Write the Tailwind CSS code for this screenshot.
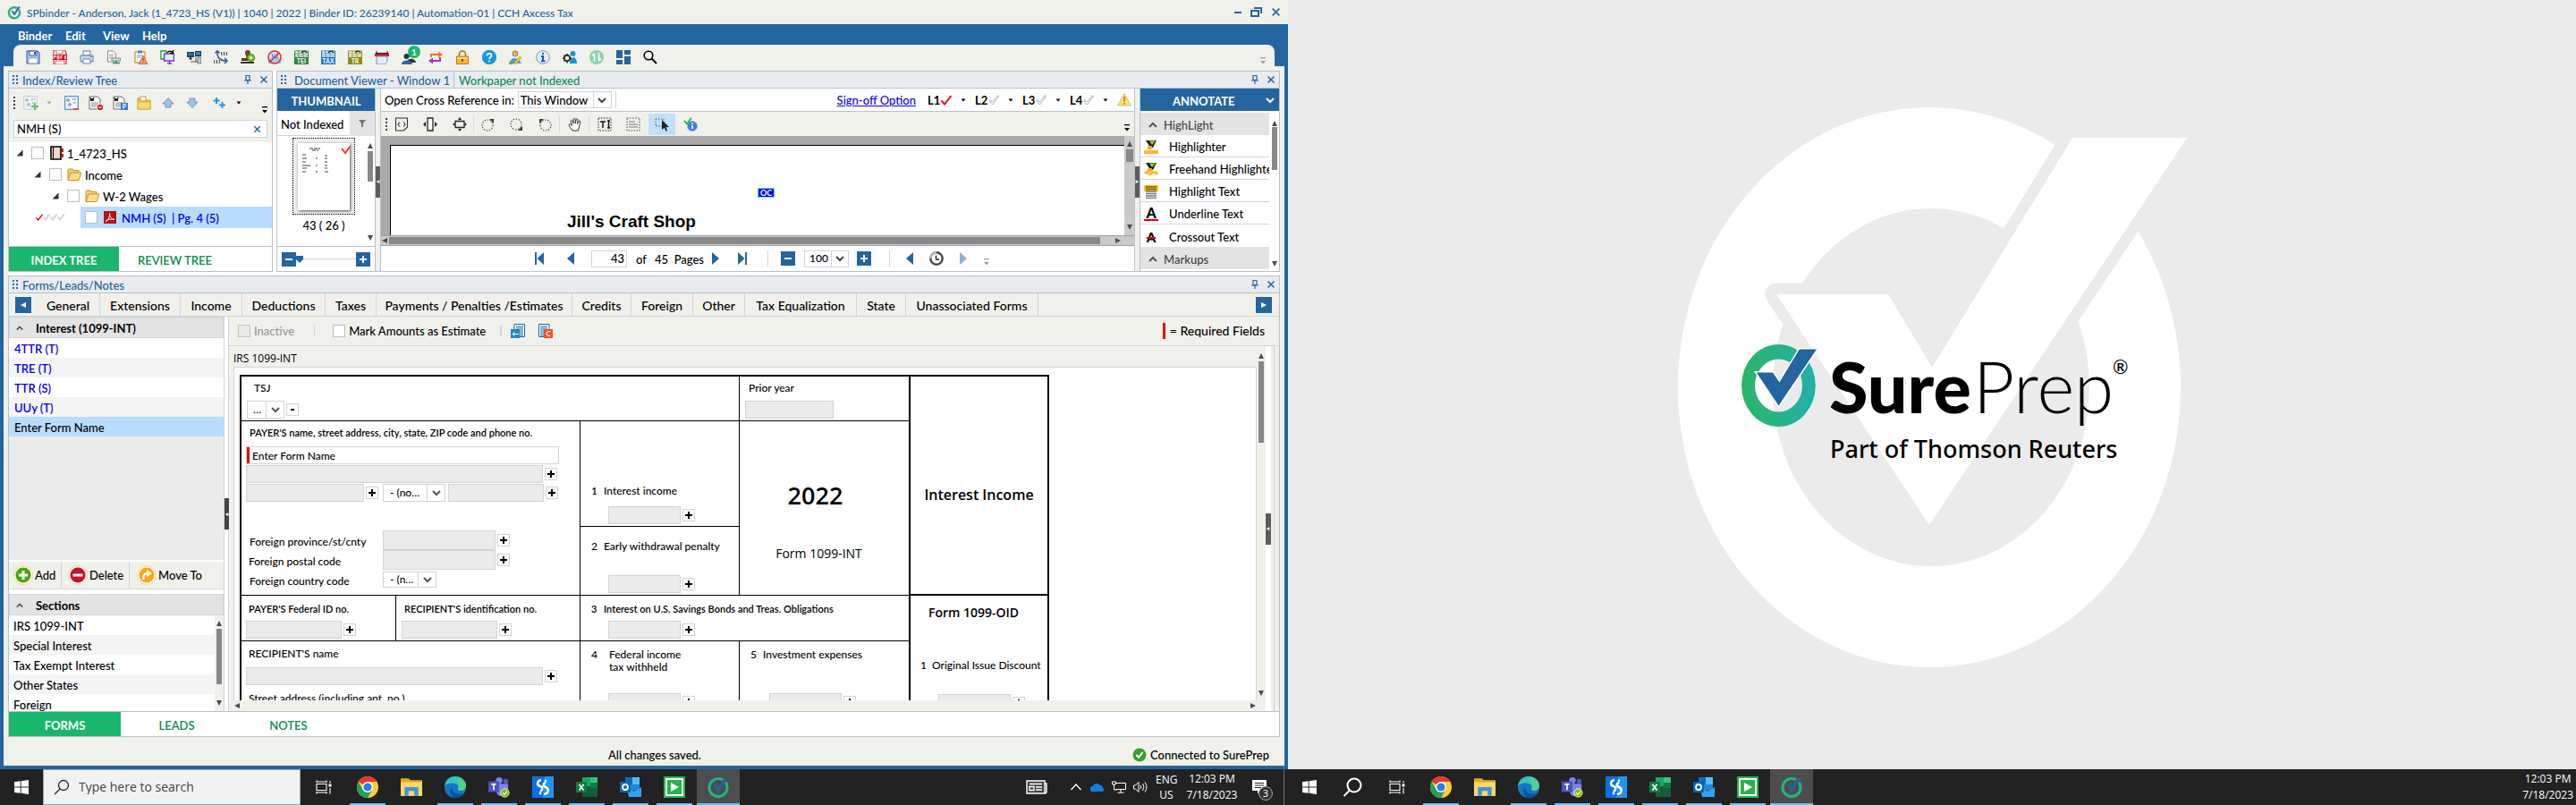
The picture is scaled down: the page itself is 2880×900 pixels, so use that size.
<!DOCTYPE html>
<html lang="en">
<head>
<meta charset="utf-8">
<title>SPbinder</title>
<script src="https://cdn.jsdelivr.net/npm/@tailwindcss/browser@4"></script>
</head>
<body class="font-['Lato',sans-serif] text-[13px] leading-4 font-medium text-black">
<!-- icon library -->
<svg width="0" height="0" class="absolute" aria-hidden="true">
<defs>
<linearGradient id="ring" x1="0" x2="1"><stop offset="0" stop-color="#2cb567"/><stop offset="1" stop-color="#22b0ac"/></linearGradient>
<symbol id="logo" viewBox="0 0 24 24"><circle cx="12" cy="12.5" r="9.2" fill="none" stroke="url(#ring)" stroke-width="3.6"/><path d="M6 8.5h4l2.2 3.5L18 2h5L12.200 18z" fill="#2465a0" stroke="#f1f1eb" stroke-width=".8"/></symbol>
<symbol id="logoDark" viewBox="0 0 24 24"><circle cx="12" cy="12.500" r="10" fill="none" stroke="#22b08a" stroke-width="3.200"/><path d="M6 8.500h4l2.200 3.500L18.500 2h4.500L12.200 19z" fill="#2465a0" stroke="#4d4d4d" stroke-width=".6"/></symbol>
<symbol id="pin" viewBox="0 0 10 12"><path d="M3 1.500h4v5H3zM1 7h8M5 7v4" fill="none" stroke="#2465a0" stroke-width="1.200"/></symbol>
<symbol id="x" viewBox="0 0 10 10"><path d="M1.500 1.500l7 7M8.500 1.500l-7 7" fill="none" stroke="currentColor" stroke-width="1.500"/></symbol>
<symbol id="grip" viewBox="0 0 8 12"><path d="M1 1h2v2H1zM5 1h2v2H5zM1 5h2v2H1zM5 5h2v2H5zM1 9h2v2H1zM5 9h2v2H5z" fill="#2465a0"/></symbol>
<symbol id="dots" viewBox="0 0 3 16"><path d="M0 1h2v2H0zM0 5h2v2H0zM0 9h2v2H0zM0 13h2v2H0z" fill="#444"/></symbol>
<symbol id="over" viewBox="0 0 6 8"><path d="M0 0h6v1.200H0zM0 4h6L3 7.500z" fill="currentColor"/></symbol>
<symbol id="up" viewBox="0 0 8 8"><path d="M4 1l3 6H1z" fill="#4a4d52"/></symbol>
<symbol id="down" viewBox="0 0 8 8"><path d="M4 7l3-6H1z" fill="#4a4d52"/></symbol>
<symbol id="left" viewBox="0 0 8 8"><path d="M1 4l6-3v6z" fill="currentColor"/></symbol>
<symbol id="right" viewBox="0 0 8 8"><path d="M7 4L1 1v6z" fill="currentColor"/></symbol>
<symbol id="chev" viewBox="0 0 10 8"><path d="M1 2l4 4 4-4" fill="none" stroke="currentColor" stroke-width="2"/></symbol>
<symbol id="chevup" viewBox="0 0 10 8"><path d="M1 6l4-4 4 4" fill="none" stroke="#555" stroke-width="2"/></symbol>
<symbol id="caret" viewBox="0 0 6 4"><path d="M.5.5h5L3 3.500z" fill="currentColor"/></symbol>
<symbol id="exp" viewBox="0 0 8 8"><path d="M7.500.5v7h-7z" fill="#333"/></symbol>
<symbol id="plus" viewBox="0 0 10 10"><path d="M5 1v8M1 5h8" stroke="currentColor" stroke-width="2" fill="none"/></symbol>
<symbol id="minus" viewBox="0 0 10 10"><path d="M1 5h8" stroke="currentColor" stroke-width="2" fill="none"/></symbol>
<symbol id="check" viewBox="0 0 12 12"><path d="M.5 6.500L4 10.500 11.500 1" fill="none" stroke="currentColor" stroke-width="2"/></symbol>
<symbol id="checkout" viewBox="0 0 12 12"><path d="M.8 6.500l1.500-1L4.200 8 10.500.8l1 .8L4.500 11z" fill="#fff" stroke="#999" stroke-width=".8"/></symbol>
<!-- main toolbar -->
<symbol id="save" viewBox="0 0 16 16"><path d="M1 1h12l2 2v12H1z" fill="#a9c8f2" stroke="#2b55a8"/><path d="M4 1h8v5H4z" fill="#fff" stroke="#2b55a8"/><path d="M3 9h10v6H3z" fill="#fff" stroke="#7da0d8"/><path d="M9 2h2v3H9z" fill="#2b55a8"/></symbol>
<symbol id="pbfx" viewBox="0 0 16 16"><path d="M1 0h12l2 2v14H1z" fill="#fbecec" stroke="#b23" /><path d="M4 0h7v4H4zM3 12h10v4H3z" fill="#fff" stroke="#c66"/><path d="M-1 5h18v6H-1z" fill="#d8000f"/><path d="M1 10V6h2v2H1M5 6h2v4H5zM5 8h2M9 10V6h2M9 8h2M13 6l2 4M15 6l-2 4" stroke="#fff" fill="none" stroke-width=".9"/></symbol>
<symbol id="print" viewBox="0 0 16 16"><path d="M4 1h8v5H4z" fill="#fff" stroke="#678"/><path d="M1 6h14v7H1z" fill="#c9dbf3" stroke="#5b7fb5"/><path d="M4 10h8v5H4z" fill="#fff" stroke="#5b7fb5"/><path d="M12 7.500h2" stroke="#2a5"/></symbol>
<symbol id="scan" viewBox="0 0 16 16"><path d="M1.500 1h6l3 3v9h-9z" fill="#fff" stroke="#888"/><path d="M3 5h5M3 7h5M3 9h4" stroke="#999"/><path d="M6 9h9.500v3H6z" fill="#ddd" stroke="#888"/><path d="M7 14.500h8M11 12v3" stroke="#1d9a55" stroke-width="1.500"/></symbol>
<symbol id="clipw" viewBox="0 0 16 16"><path d="M2 2h11v12H2z" fill="#fff" stroke="#d9a13b" stroke-width="1.500"/><path d="M5 .5h5v3H5z" fill="#4b87c9"/><path d="M4 6h6M4 8h4" stroke="#69c"/><path d="M11 6l5 9.500H6z" fill="#f5a07c" stroke="#c9532a" stroke-width=".8"/><path d="M11 9v3M11 13v1" stroke="#a22"/></symbol>
<symbol id="send" viewBox="0 0 16 16"><path d="M1 1h6v9H1z" fill="#fff" stroke="#1a9a3c" stroke-width="1.300"/><path d="M4.500 4h11v8h-11z" fill="#d7f0fa" stroke="#8a2be2" stroke-width="1.500"/><path d="M8 15h5M10.500 12v3" stroke="#8a2be2" stroke-width="1.500"/><path d="M8 3c2-3 5-2 6 0M14.500 0v3.500H11" fill="none" stroke="#000" stroke-width="1.300"/></symbol>
<symbol id="pcs" viewBox="0 0 16 16"><path d="M0 2h8v6H0z" fill="#1a3a5a"/><path d="M1 3h6v3.500H1z" fill="#2f6da8"/><path d="M3 8h2v1.500H3zM2 9.500h4v1H2z" fill="#333"/><path d="M9 1h7v6H9z" fill="#1a3a5a"/><path d="M10 2h5v3.500h-5z" fill="#3a80c0"/><path d="M12 8h4v7h-4z" fill="#b8c8d8" stroke="#445" stroke-width=".6"/><path d="M4 13h8M10 7v6" stroke="#556" fill="none"/></symbol>
<symbol id="xref" viewBox="0 0 16 16"><path d="M4 1v4c1 5 4 7 10 7M1.500 3.500L4 .8l2.500 2.700M12 9l3 3-3 3" fill="none" stroke="#35539a" stroke-width="1.500"/><path d="M9 2q-1 2 0 4M14 2q1 2 0 4M11.500 2v4M1 11q-1 2 0 4M6 11q1 2 0 4M3.500 11v4" stroke="#222" fill="none" stroke-width=".9"/></symbol>
<symbol id="stamp" viewBox="0 0 16 16"><path d="M5 3a3 3 0 016 0c0 2-1.500 3-1.500 6h-3C6.500 6 5 5 5 3z" fill="#7a3b2a"/><path d="M1 9h13v3H1z" fill="#6a2f20"/><path d="M0 14h15" stroke="#333" stroke-width="2"/><circle cx="11.500" cy="8.500" r="4" fill="#6bbf1d" stroke="#3c8a0c"/><path d="M11.500 6.500v4M9.500 8.500h4" stroke="#fff" stroke-width="1.300"/></symbol>
<symbol id="nostamp" viewBox="0 0 16 16"><path d="M1 15V9l4-1 1-4h4l1 4 4 1v6z" fill="#7db7ff"/><circle cx="8" cy="8" r="7" fill="#cfe4ff" fill-opacity=".5" stroke="#ee2a2a" stroke-width="1.600"/><path d="M5 4l1 4 4 1M11 4v6" stroke="#2f7de0" fill="none"/><path d="M3 13L13 3" stroke="#ee2a2a" stroke-width="1.600"/></symbol>
<symbol id="sheet" viewBox="0 0 16 16"><path d="M.5 1h15v7H.5z" fill="#fff" stroke="currentColor"/><path d="M1 3.500h14M1 5.500h14M5 1v7M10 1v7" stroke="currentColor" stroke-width=".7"/><path d="M8 3c2-3 5-2 6 0" stroke="#222" fill="none" stroke-width="1.300"/><path d="M0 8h16v8H0z" fill="currentColor"/></symbol>
<symbol id="redprn" viewBox="0 0 16 16"><path d="M2 1h12l2 4H0z" fill="#222"/><path d="M2.500 0h11v3h-11z" fill="#e9e9f5"/><path d="M0 4h16v3H0z" fill="#e00f1c"/><path d="M2 7h12v6l-3 3H2z" fill="#e4ecfa" stroke="#7a8fc0"/></symbol>
<symbol id="users" viewBox="0 0 16 16"><circle cx="11" cy="5" r="3" fill="#333"/><path d="M6 14c0-5 9-6 10 0z" fill="#333"/><circle cx="5.500" cy="7" r="3" fill="#26334d"/><path d="M0 16c0-6 11-6 12 0z" fill="#2f64ad"/></symbol>
<symbol id="swap" viewBox="0 0 16 16"><path d="M3 8V5h10" fill="none" stroke="#ff6a1f" stroke-width="2"/><path d="M11 1.500v7L16 5z" fill="#ff6a1f"/><path d="M13 8v4H4" fill="none" stroke="#9b30d9" stroke-width="2"/><path d="M5 8.500v7L0 12z" fill="#9b30d9"/></symbol>
<symbol id="lock" viewBox="0 0 16 16"><path d="M4.500 8V4.500a3.500 3.500 0 017 0V8" fill="none" stroke="#9a7520" stroke-width="1.600"/><path d="M1.500 7h13v8.500h-13z" fill="#ffb52e" stroke="#c27c0c"/><path d="M2 8h12v2H2z" fill="#ffd97a"/><path d="M8 10v3" stroke="#5a3a00" stroke-width="1.600"/></symbol>
<symbol id="help" viewBox="0 0 16 16"><circle cx="8" cy="8" r="7.800" fill="#149be3" stroke="#0b6fb5" stroke-width=".6"/><path d="M5.500 6.300c0-3.300 5-3.300 5-.3 0 1.800-2.400 1.900-2.400 4M8.100 11.500v1.700" fill="none" stroke="#fff" stroke-width="1.700"/></symbol>
<symbol id="pen" viewBox="0 0 16 16"><circle cx="7" cy="4" r="3" fill="#e8b46a" stroke="#7a5010" stroke-width=".7"/><path d="M1 15c0-8 10-8 13 0z" fill="#4f9be0"/><path d="M0 13h4v3H0z" fill="#59b84a"/><path d="M5 15l7-8 2 1.500-6 7z" fill="#ffc83a" stroke="#a77a10" stroke-width=".6"/></symbol>
<symbol id="info" viewBox="0 0 16 16"><circle cx="8" cy="8" r="7.300" fill="#e6eefb" stroke="#6f94c4"/><path d="M8 3v2M6 7h2v5M6 12.200h4.500" stroke="#1558c0" stroke-width="2" fill="none"/></symbol>
<symbol id="gearp" viewBox="0 0 16 16"><circle cx="5" cy="9" r="3.300" fill="none" stroke="#333" stroke-width="2"/><path d="M5 4v2M5 12v2.500M0 9h2M8 9h2M1.500 5.500L3 7M1.500 12.500L3 11" stroke="#333" stroke-width="1.600"/><circle cx="11.500" cy="4" r="3" fill="#1596d8"/><path d="M8 15c0-9 8-9 8 0z" fill="#1596d8"/></symbol>
<symbol id="sync" viewBox="0 0 16 16"><circle cx="8" cy="8" r="8" fill="#8bd3ae"/><path d="M5.500 13V4M3 6.500L5.500 4M10.500 3v9M13 9.500L10.500 12" stroke="#fff" stroke-width="1.600" fill="none"/></symbol>
<symbol id="dash" viewBox="0 0 16 16"><path d="M0 0h7v9H0zM9 0h7v5H9zM0 11h7v5H0zM9 7h7v9H9z" fill="#2465a0"/></symbol>
<symbol id="find" viewBox="0 0 16 16"><circle cx="6" cy="6" r="4.800" fill="none" stroke="currentColor" stroke-width="1.600"/><path d="M9.500 9.500L15 15" stroke="currentColor" stroke-width="1.800"/></symbol>
<!-- tree -->
<symbol id="addnode" viewBox="0 0 16 16"><path d="M.7.700h14.600v14.600H.7z" fill="#eef4fc" stroke="currentColor"/><path d="M4 3v4M2 5h4M9 4h4M6 8v4M4 10h4M10 8h3" stroke="#444" stroke-width=".9" stroke-dasharray="1 .6"/></symbol>
<symbol id="doc" viewBox="0 0 16 16"><path d="M1 1h9l3 3v11H1z" fill="#fff" stroke="#666"/><path d="M3 8h8M3 10h8M3 12h6" stroke="#888"/><path d="M2 2l1 4 1-3 1 3 1-4" stroke="#000" fill="none"/></symbol>
<symbol id="fold" viewBox="0 0 16 16"><path d="M1 3h5l1 2h8v10H1z" fill="#f2c65a" stroke="#c99a2c"/><path d="M4 1h6v5H4z" fill="#fff" stroke="#c99a2c"/><path d="M1 7h14v8H1z" fill="#ffd76b" stroke="#d1a236" stroke-width=".7"/></symbol>
<symbol id="openf" viewBox="0 0 16 16"><path d="M1 14V3l1-1h4l1 1.500h6V6" fill="#f6d377" stroke="#c58f1e"/><path d="M1 14.500L4 6h12l-3 8.500z" fill="#ffe08a" stroke="#c58f1e"/></symbol>
<symbol id="arru" viewBox="0 0 14 12"><path d="M7 .6L13.200 7H10v4H4V7H.8z" fill="#9cc4e8" stroke="#7b93aa"/></symbol>
<symbol id="pluses" viewBox="0 0 14 12"><path d="M4 0v7M.5 3.500h7M10.500 5v7M7 8.500h7" stroke="#2196f3" stroke-width="2"/></symbol>
<symbol id="binder" viewBox="0 0 16 16"><path d="M1 1h11v14H1z" fill="#f0d5c8" stroke="#000" stroke-width="1.600"/><path d="M3.500 1v14" stroke="#000"/><path d="M13 3h2v4h-2zM13 9h2v4h-2z" fill="#f00"/></symbol>
<symbol id="pdf" viewBox="0 0 14 14"><path d="M0 0h14v14H0z" fill="#b80f14"/><path d="M2 11.500c3-1 5-5 4.500-9C7 7 9 9 12 9.500 9 8.500 4 9 2 11.500z" fill="none" stroke="#fff"/></symbol>
<symbol id="funnel" viewBox="0 0 10 10"><path d="M1 1h8L6 5v4H4V5z" fill="#777"/></symbol>
<!-- viewer -->
<symbol id="v1" viewBox="0 0 16 16"><path d="M1.500 1h13v10l-4 4h-9z M6 5.500L4 8l2 2.500M10 5.500L12 8l-2 2.500" fill="none" stroke="#333" stroke-width="1.100"/></symbol>
<symbol id="v2" viewBox="0 0 16 16"><path d="M5 1h6v14H5z" fill="#fff" stroke="#222" stroke-width="1.300"/><path d="M0 8l3-3v6zM16 8l-3-3v6z" fill="#222"/></symbol>
<symbol id="v3" viewBox="0 0 16 16"><path d="M3 4.500h10v7H3z" fill="none" stroke="#222" stroke-width="1.300"/><path d="M8 0l2 3H6zM8 16l2-3H6zM0 8l2.500-2v4zM16 8l-2.500-2v4z" fill="#222"/></symbol>
<symbol id="rot" viewBox="0 0 16 16"><circle cx="8" cy="9" r="6" fill="none" stroke="#555" stroke-dasharray="1.500 1.500" stroke-width="1.200"/><path d="M10 2h5v5z" fill="#4a3a20"/></symbol>
<symbol id="hand" viewBox="0 0 16 16"><path d="M5 15C3 12 1 10 1 8.500 2 7 3.500 8.500 4.500 9.500L3 4.500C3.500 3 5 3.500 5.300 4.500L6 7V2.500C6.500 1 8 1.200 8.200 2.500V7l1-4.500c.8-1.200 2-.5 1.900.7L10.500 7.500 12.300 4.500c1-.8 2 .2 1.500 1.200L12.500 11l-1 4z" fill="#fff" stroke="#333"/></symbol>
<symbol id="tsel" viewBox="0 0 16 16"><path d="M1 1h14v14H1z" fill="none" stroke="#222" stroke-dasharray="1.500 1.500"/><path d="M3 5h6M6 5v7M11 4h3M12.500 4v8M11 12h3" stroke="#111" stroke-width="1.500"/></symbol>
<symbol id="lsel" viewBox="0 0 16 16"><path d="M1 1h14v14H1z" fill="none" stroke="#444" stroke-dasharray="1.500 1.500"/><path d="M3 5h7M3 8h10M3 11h10" stroke="#777" stroke-width="1.200"/></symbol>
<symbol id="csel" viewBox="0 0 16 16"><path d="M1 2h9v8H1z" fill="none" stroke="#567" stroke-dasharray="1.500 1.500"/><path d="M8 3l8 8-3.500.3L14 15l-1.500.7L10.800 12 8 14z" fill="#222"/></symbol>
<symbol id="ichk" viewBox="0 0 16 16"><circle cx="10" cy="10" r="5.600" fill="#3d7be6" stroke="#9ab9ee"/><path d="M10 6.500v1.500M10 9v4" stroke="#fff" stroke-width="1.800"/><path d="M1 4l3 3.500L9 .8" fill="none" stroke="#13c13a" stroke-width="1.800"/></symbol>
<symbol id="warn" viewBox="0 0 16 15"><path d="M8 .8L15.500 14H.5z" fill="#ffe56b" stroke="#d6c06a"/><path d="M8 4v5.500M8 11v1.800" stroke="#f0603a" stroke-width="1.800"/></symbol>
<symbol id="clock" viewBox="0 0 16 16"><circle cx="8" cy="8" r="6.700" fill="#fff" stroke="#444" stroke-width="2.400"/><path d="M1.300 8a6.700 6.700 0 016.700-6.700" fill="none" stroke="#bbb" stroke-width="2.400"/><path d="M7.500 4.500V9H11" fill="none" stroke="#222" stroke-width="1.300"/></symbol>
<symbol id="hl" viewBox="0 0 16 16"><path d="M2 1h12l-4 8H7z" fill="#222"/><path d="M6 1.500h7L9 6z" fill="#9c3"/><path d="M5 7h4l-1 4H3z" fill="#f6a81c"/></symbol>
<symbol id="hlt" viewBox="0 0 16 15"><path d="M0 0h16v7H0z" fill="#fdbf0f"/><path d="M2 2h12M2 4.500h12" stroke="#7a5a10" stroke-width="1.300"/><path d="M2 7h12M2 9.500h12M2 12h12M2 14.500h12" stroke="#777" stroke-width="1.300"/></symbol>
<!-- forms -->
<symbol id="fadd" viewBox="0 0 22 22"><circle cx="11" cy="11" r="10.500" fill="#fdf6e3" stroke="#ecd9a8"/><circle cx="11" cy="11" r="8.500" fill="#48a50e"/><path d="M11 6v10M6 11h10" stroke="#fff" stroke-width="3"/></symbol>
<symbol id="fdel" viewBox="0 0 22 22"><circle cx="11" cy="11" r="10.500" fill="#fdf6e3" stroke="#ecd9a8"/><circle cx="11" cy="11" r="8.500" fill="#c8102e"/><path d="M5.500 11h11" stroke="#fff" stroke-width="3"/></symbol>
<symbol id="fmov" viewBox="0 0 22 22"><circle cx="11" cy="11" r="10.500" fill="#fdf6e3" stroke="#ecd9a8"/><circle cx="11" cy="11" r="8.500" fill="#f9a51a"/><path d="M7.500 16c-1-5 1-7 4.500-7" stroke="#fff" stroke-width="2.500" fill="none"/><path d="M11 5l6 4-6 4z" fill="#fff"/></symbol>
<symbol id="dl" viewBox="0 0 16 16"><path d="M4 .5h11.500v14H4z" fill="#fff" stroke="#1b66ad"/><path d="M6 3h8M6 5h8M6 7h8M6 9h8M6 11h8M6 13h8" stroke="#1b66ad"/></symbol>
<symbol id="ok" viewBox="0 0 16 16"><circle cx="8" cy="8" r="7.500" fill="#35a02a"/><path d="M4.500 8l2.500 3 4.500-6" fill="none" stroke="#fff" stroke-width="2"/></symbol>
<!-- taskbar -->
<symbol id="win" viewBox="0 0 16 16"><path d="M0 2.200L6.700 1.300V7.600H0zM7.600 1.200L16 0v7.600H7.600zM0 8.500h6.700v6.300L0 13.900zM7.600 8.500H16V16l-8.400-1.200z" fill="#fff"/></symbol>
<symbol id="mag" viewBox="0 0 18 18"><circle cx="11" cy="7" r="5.500" fill="none" stroke="currentColor" stroke-width="1.300"/><path d="M7 11l-6 6" stroke="currentColor" stroke-width="1.300"/></symbol>
<symbol id="tview" viewBox="0 0 18 16"><path d="M1 4.500h11v7H1zM1 .5V3M12 .5V3M1 2h11M1 13v2.500M12 13v2.500M1 14h11M16 1v2.500M16 9v6.500" fill="none" stroke="#fff" stroke-width="1.100"/><path d="M14.500 4.500h3v3h-3z" fill="#fff"/></symbol>
<symbol id="chrome" viewBox="0 0 24 24"><circle cx="12" cy="12" r="12" fill="#fc3"/><path d="M12 12L1.600 6A12 12 0 0122.400 6H12z" fill="#e33b2e"/><path d="M1.600 6A12 12 0 0012 24l5.200-9-5.200-3-5.200 3z" fill="#21a15a"/><circle cx="12" cy="12" r="6" fill="#fff"/><circle cx="12" cy="12" r="4.600" fill="#2b7de9"/></symbol>
<symbol id="expl" viewBox="0 0 22 20"><path d="M0 1h8l2 2h12v16H0z" fill="#e8a91c"/><path d="M0 5h22v14H0z" fill="#ffd667"/><path d="M4 19v-9h14v9h-4v-5H8v5z" fill="#3a96dd"/></symbol>
<symbol id="edge" viewBox="0 0 24 24"><circle cx="12" cy="12" r="12" fill="#1277c9"/><path d="M0 11C1 3 7 0 12 0c7 0 12 5 12 10 0 4-3 6-6 6-2 0-3-1-3-2 1-1 1-5-3-6C7 6.500 2 8 0 11z" fill="#36c5b8"/><path d="M14 1c6 1 10 5 10 9 0 4-3 6-6 6-2 0-3-1-3-2 3-5-1-9-1-13z" fill="#62d672" opacity=".7"/><path d="M8 12c0 6 5 9 13 7-3 4-7 5-10 5C6 22 5 15 8 12z" fill="#0c4f98"/></symbol>
<symbol id="teams" viewBox="0 0 26 24"><circle cx="13" cy="4" r="4" fill="#7b83eb"/><circle cx="21" cy="5" r="3" fill="#5059c9"/><path d="M10 8h14v8c0 4-5 7-8 7-4 0-6-3-6-5z" fill="#7b83eb"/><path d="M0 5h13v13H0z" fill="#4b53bc"/><path d="M3.500 8.500h6M6.500 8.500v7" stroke="#fff" stroke-width="1.800"/><circle cx="20" cy="19" r="5" fill="#7fba00" stroke="#fff"/><path d="M17.500 19l2 2 3-4" stroke="#fff" fill="none" stroke-width="1.300"/></symbol>
<symbol id="sapp" viewBox="0 0 24 24"><path d="M0 0h24v24H0z" fill="#0a6ee8"/><path d="M14 0h10v24H12z" fill="#1f95f3"/><path d="M10 4c-5 1-5 6-1 7 3 1 3 4 0 6M13 20c6-1 6-6 2-8-3-1-3-4 0-5" fill="none" stroke="#fff" stroke-width="2.600"/><circle cx="9" cy="19" r="1.400" fill="#fff"/><circle cx="15" cy="5" r="1.400" fill="#fff"/></symbol>
<symbol id="excel" viewBox="0 0 24 22"><path d="M7 0h17v22H7z" fill="#185c37"/><path d="M7 0h9v10H7z" fill="#21a366"/><path d="M16 0h8v6h-8z" fill="#33c481"/><path d="M16 6h8v6h-8z" fill="#107c41"/><path d="M0 5h12v12H0z" fill="#107c41"/><path d="M3.500 8l5 6.500M8.500 8l-5 6.500" stroke="#fff" stroke-width="1.700"/></symbol>
<symbol id="outl" viewBox="0 0 24 22"><path d="M6 0h16v16H6z" fill="#0f6cbd"/><path d="M14 0h8v8h-8z" fill="#50c0f5"/><path d="M6 8h16v6H6z" fill="#1a8ae0"/><path d="M8 12l8 4 8-5v11H10z" fill="#33a3ee"/><path d="M0 5h12v12H0z" fill="#0a64b8"/><circle cx="6" cy="11" r="3" fill="none" stroke="#fff" stroke-width="1.800"/></symbol>
<symbol id="play" viewBox="0 0 24 24"><path d="M0 0h24v24H0z" fill="#25b34b"/><path d="M3 3h18v18H3z" fill="none" stroke="#fff" stroke-width="2"/><path d="M8 7l9 5-9 5z" fill="#fff"/></symbol>
<symbol id="news" viewBox="0 0 24 16"><path d="M1 1h20v14H1zM21 4h2v9q0 2-2 2" fill="#444" stroke="#fff" stroke-width="1.400"/><path d="M4 4.500h14M11 8h7M11 11h7" stroke="#fff" stroke-width="1.300"/><path d="M4 7.500h5v4H4z" fill="none" stroke="#fff" stroke-width="1.300"/></symbol>
<symbol id="cloud" viewBox="0 0 16 10"><path d="M3 10a3 3 0 01-.5-6A4.500 4.500 0 0110 2.500a3.500 3.500 0 013.500 2.800A2.500 2.500 0 0113.500 10z" fill="#0f7fe0"/></symbol>
<symbol id="net" viewBox="0 0 16 14"><path d="M4.500 2.500h11v7h-11M10 10v3M6.500 13.200h7M.5 1h4v3h-4zM2.500 4v6h3" fill="none" stroke="#fff"/></symbol>
<symbol id="snd" viewBox="0 0 16 14"><path d="M.5 5h2L6 1.500v11L2.500 9h-2zM8 5q1.500 2 0 4M10.500 3q3 4 0 8M13 1.500q4 5.500 0 11" fill="none" stroke="#fff"/></symbol>
<symbol id="note" viewBox="0 0 16 16"><path d="M0 0h16v12H9l-3 3.500V12H0z" fill="#fff"/><path d="M3 3.500h10M3 6h10M3 8.500h7" stroke="#222"/></symbol>
</defs>
</svg>

<div class="grid h-screen grid-cols-2 grid-rows-[minmax(0,1fr)] overflow-hidden">

<!-- ============ primary display ============ -->
<div class="flex min-h-0 min-w-0 flex-col">
<header class="flex h-[27px] shrink-0 items-center bg-[#f1f1eb] pr-2 pl-2 text-[#2465a0]">
  <svg class="h-4 w-4"><use href="#logo"/></svg>
  <h1 class="mt-[2px] ml-[6px] text-[12px]">SPbinder - Anderson, Jack (1_4723_HS (V1)) | 1040 | 2022 | Binder ID: 26239140 | Automation-01 | CCH Axcess Tax</h1>
  <div class="ml-auto flex items-center gap-[10px]">
    <button aria-label="Minimize" class="h-[2px] w-2 bg-[#2465a0]"></button>
    <button aria-label="Restore"><svg class="h-[11px] w-[13px]" viewBox="0 0 13 11"><path d="M1 4h8v6H1zM4 1h8v6" fill="none" stroke="#2465a0" stroke-width="2"/></svg></button>
    <button aria-label="Close"><svg class="h-[11px] w-[11px]"><use href="#x"/></svg></button>
  </div>
</header>

<div class="flex min-h-0 flex-1 flex-col bg-[#2465a0] px-1 pb-1">
<nav class="flex h-[23px] shrink-0 items-center gap-4 pt-[2px] pl-[16px] font-bold text-white">
  <button class="w-[37px] text-left">Binder</button><button class="w-[26px] text-left">Edit</button><button class="w-7 text-left">View</button><button class="text-left">Help</button>
</nav>
<div class="mx-[11px] flex h-[24px] shrink-0 items-center rounded-t-lg bg-[#f1f1eb] pl-[7px] pt-1">
  <div class="flex [&>button]:relative [&>button]:flex [&>button]:w-[30px] [&>button]:justify-center [&_svg]:h-4 [&_svg]:w-4">
    <button aria-label="Save"><svg><use href="#save"/></svg></button>
    <button aria-label="PBFX"><svg><use href="#pbfx"/></svg></button>
    <button aria-label="Print"><svg><use href="#print"/></svg></button>
    <button aria-label="Scan"><svg><use href="#scan"/></svg></button>
    <button aria-label="Diagnostics"><svg><use href="#clipw"/></svg></button>
    <button aria-label="Send to display"><svg><use href="#send"/></svg></button>
    <button aria-label="Displays"><svg><use href="#pcs"/></svg></button>
    <button aria-label="Cross reference"><svg><use href="#xref"/></svg></button>
    <button aria-label="Add stamp"><svg><use href="#stamp"/></svg></button>
    <button aria-label="Hide stamps"><svg><use href="#nostamp"/></svg></button>
    <button class="text-[#2f8540]"><svg><use href="#sheet"/></svg><span class="absolute top-2 text-[7px] leading-2 font-bold text-white">TEI</span></button>
    <button class="text-[#1d78c8]"><svg><use href="#sheet"/></svg><span class="absolute top-2 text-[7px] leading-2 font-bold text-white">TAX</span></button>
    <button class="text-[#918a12]"><svg><use href="#sheet"/></svg><span class="absolute top-2 text-[7px] leading-2 font-bold text-white">TR</span></button>
    <button aria-label="Print queue"><svg><use href="#redprn"/></svg></button>
    <button><svg><use href="#users"/></svg><span class="absolute -top-[5px] left-[14px] h-[14px] w-[14px] rounded-full bg-[#1ab66b] text-center text-[10px] leading-[14px] font-bold text-white">1</span></button>
    <button aria-label="Swap"><svg><use href="#swap"/></svg></button>
    <button aria-label="Lock"><svg><use href="#lock"/></svg></button>
    <button aria-label="Help"><svg><use href="#help"/></svg></button>
    <button aria-label="Sign"><svg><use href="#pen"/></svg></button>
    <button aria-label="Info"><svg><use href="#info"/></svg></button>
    <button aria-label="User settings"><svg><use href="#gearp"/></svg></button>
    <button aria-label="Sync"><svg><use href="#sync"/></svg></button>
    <button aria-label="Dashboard"><svg><use href="#dash"/></svg></button>
    <button aria-label="Find"><svg><use href="#find"/></svg></button>
  </div>
  <svg class="mt-2 mr-[10px] ml-auto h-2 w-[6px] text-gray-400"><use href="#over"/></svg>
</div>

<main class="flex min-h-0 flex-1 flex-col bg-[#f1f1eb] px-[5px] pt-[5px]">
<div class="flex h-[225px] shrink-0 gap-1 bg-white">

  <!-- index / review tree -->
  <section class="flex w-[296px] flex-col border border-[#b9c1c9] bg-white">
    <div class="flex h-[19px] items-center border-b border-[#b9c1c9] bg-[#e8ebf0] pr-1 pl-[3px] text-[#2465a0]">
      <svg class="h-3 w-2"><use href="#grip"/></svg><h2 class="ml-1 pt-[2px]">Index/Review Tree</h2>
      <svg class="mr-2 ml-auto h-3 w-[10px]"><use href="#pin"/></svg><svg class="h-[10px] w-[10px]"><use href="#x"/></svg>
    </div>
    <div class="bg-[#f1f1eb] px-[5px] pb-[5px]">
      <div class="flex h-[35px] items-center pb-1 [&>svg]:h-4 [&>svg]:w-4">
        <svg class="max-w-[3px]"><use href="#dots"/></svg>
        <span class="relative ml-2 h-4 w-4 text-[#a9c2dd]"><svg class="h-4 w-4 opacity-70"><use href="#addnode"/></svg><svg class="absolute -right-[2px] -bottom-[1px] h-[10px] w-[10px] text-[#6dbb6d]"><use href="#plus"/></svg></span>
        <svg class="ml-[10px] max-h-1 max-w-[6px] text-gray-400"><use href="#caret"/></svg>
        <span class="relative ml-[14px] h-4 w-4 text-[#2f7de0]"><svg class="h-4 w-4"><use href="#addnode"/></svg><svg class="absolute -right-[1px] -bottom-[3px] h-2 w-2 text-[#e6352b]"><use href="#minus"/></svg></span>
        <span class="relative ml-[11px] h-4 w-4"><svg class="h-4 w-4"><use href="#doc"/></svg><svg class="absolute -right-[1px] -bottom-[1px] h-2 w-2"><use href="#fdel"/></svg></span>
        <span class="relative ml-[11px] h-4 w-4"><svg class="h-4 w-4"><use href="#doc"/></svg><span class="absolute -right-[1px] bottom-0 h-2 w-2 bg-[#3a78d8] text-center text-[7px] leading-2 font-bold text-white">P</span></span>
        <svg class="ml-[11px]"><use href="#fold"/></svg>
        <svg class="ml-[12px] max-h-3 max-w-[14px]"><use href="#arru"/></svg>
        <svg class="ml-[13px] max-h-3 max-w-[14px] rotate-180"><use href="#arru"/></svg>
        <svg class="ml-[16px] max-h-3 max-w-[14px]"><use href="#pluses"/></svg>
        <svg class="ml-[12px] max-h-1 max-w-[6px]"><use href="#caret"/></svg>
        <svg class="mt-4 ml-auto max-h-2 max-w-[6px]"><use href="#over"/></svg>
      </div>
      <div class="flex h-5 items-center border border-[#cfd3d6] bg-white pr-[6px] pl-[3px] text-[#2465a0]">
        <input aria-label="Search tree" value="NMH (S)" class="h-4 min-w-0 flex-1 text-black outline-none"><svg class="h-[9px] w-[9px]"><use href="#x"/></svg>
      </div>
    </div>
    <ul class="flex-1 [&>li]:flex [&>li]:h-6 [&>li]:items-center">
      <li class="pl-2"><svg class="h-2 w-2"><use href="#exp"/></svg><input type="checkbox" aria-label="1_4723_HS" class="ml-[9px] h-[14px] w-[14px] appearance-none border border-[#b5c0ca]"><svg class="ml-[7px] h-4 w-4"><use href="#binder"/></svg><span class="ml-[3px] pt-[2px]">1_4723_HS</span></li>
      <li class="pl-7"><svg class="h-2 w-2"><use href="#exp"/></svg><input type="checkbox" aria-label="Income" class="ml-[9px] h-[14px] w-[14px] appearance-none border border-[#b5c0ca]"><svg class="ml-[6px] h-4 w-4"><use href="#openf"/></svg><span class="ml-1 pt-[2px]">Income</span></li>
      <li class="pl-12"><svg class="h-2 w-2"><use href="#exp"/></svg><input type="checkbox" aria-label="W-2 Wages" class="ml-[9px] h-[14px] w-[14px] appearance-none border border-[#b5c0ca]"><svg class="ml-[6px] h-4 w-4"><use href="#openf"/></svg><span class="ml-1 pt-[2px]">W-2 Wages</span></li>
      <li class="pl-[30px]"><svg class="h-2 w-2 text-red-600"><use href="#check"/></svg><svg class="h-2 w-2"><use href="#checkout"/></svg><svg class="h-2 w-2"><use href="#checkout"/></svg><svg class="h-2 w-2"><use href="#checkout"/></svg>
        <span class="ml-[18px] flex h-6 flex-1 items-center bg-[#b9ddff] pl-[5px] text-[#0a00f0]"><input type="checkbox" aria-label="NMH (S) page 4" class="h-[14px] w-[14px] appearance-none border border-[#b5c0ca] bg-white"><svg class="mr-[6px] ml-[7px] h-[14px] w-[14px]"><use href="#pdf"/></svg><span class="pt-[2px] font-semibold whitespace-pre">NMH (S)  | Pg. 4 (5)</span></span></li>
    </ul>
    <div class="flex h-7 border-t border-[#b9c1c9]">
      <button class="w-[123px] bg-[#1ab66b] pt-[2px] font-bold text-white">INDEX TREE</button><button class="w-[125px] pt-[2px] font-semibold text-[#0c8c55]">REVIEW TREE</button>
    </div>
  </section>

  <!-- document viewer -->
  <section class="flex min-w-0 flex-1 flex-col border border-[#b9c1c9] bg-white">
    <div class="flex h-[19px] shrink-0 items-center border-b border-[#b9c1c9] bg-[#e8ebf0] pr-1 pl-[3px] text-[#2465a0]">
      <svg class="h-3 w-2"><use href="#grip"/></svg><h2 class="ml-2 pt-[2px]">Document Viewer - Window 1</h2><span class="ml-1 border-l border-[#b9c1c9] pt-[2px] pl-[5px] text-[#0c8c55]">Workpaper not Indexed</span>
      <svg class="mr-2 ml-auto h-3 w-[10px]"><use href="#pin"/></svg><svg class="h-[10px] w-[10px]"><use href="#x"/></svg>
    </div>
    <div class="flex min-h-0 flex-1">
      <div class="flex w-[109px] shrink-0 flex-col">
        <button class="h-[25px] bg-[#2465a0] pt-[2px] font-bold text-white">THUMBNAIL</button>
        <div class="flex h-7 items-center border-b border-gray-300 pl-1"><span class="flex-1 pt-[2px]">Not Indexed</span><span class="flex h-7 w-7 items-center justify-center bg-[#e3e3e3]"><svg class="h-[10px] w-[10px]"><use href="#funnel"/></svg></span></div>
        <div class="flex flex-1 pt-[2px]">
          <div class="ml-[17px] flex flex-1 flex-col items-center">
            <div class="h-[86px] w-[70px] border border-dotted border-black bg-[#eee] p-[5px]"><div class="h-[75px] bg-white shadow-[1px_1px_3px_#555]">
              <svg class="h-[75px] w-[58px]" viewBox="0 0 58 75"><path d="M13 6h12M16 8h7" stroke="#333" stroke-width="1.200" stroke-dasharray="4 1"/><path d="M5 13h4M5 17h5M5 21h4M5 25h9M5 28h5M5 32h4M20 17h2M20 25h2M20 32h2M30 14h3M30 17h3M30 21h3M30 25h3M30 28h3M30 32h4" stroke="#444"/><path d="M49 6l4 5 7-9" stroke="#f22" fill="none" stroke-width="1.800"/></svg></div></div>
            <span class="mt-1">43 ( 26 )</span>
          </div>
          <div class="flex w-[22px] flex-col items-center py-[5px] pl-3"><svg class="h-2 w-2"><use href="#up"/></svg><div class="mt-[2px] mb-auto h-[34px] w-[6px] bg-[#888]"></div><svg class="h-2 w-2"><use href="#down"/></svg></div>
        </div>
        <div class="flex h-7 items-center border-t border-[#b9c1c9] px-[5px]">
          <button aria-label="Smaller" class="flex h-4 w-4 items-center justify-center bg-[#2465a0] text-white"><svg class="h-[10px] w-[10px]"><use href="#minus"/></svg></button>
          <svg class="h-2 w-2" viewBox="0 0 8 8"><path d="M0 0h8v4L4 8 0 4z" fill="#2465a0"/></svg><span class="h-px flex-1 bg-gray-300"></span>
          <button aria-label="Larger" class="flex h-4 w-4 items-center justify-center bg-[#2465a0] text-white"><svg class="h-[10px] w-[10px]"><use href="#plus"/></svg></button>
        </div>
      </div>
      <div class="flex w-[7px] shrink-0 items-center border-x border-[#b9c1c9] bg-[#f1f1eb] pb-5 text-white"><button aria-label="Collapse thumbnails" class="mt-6 flex h-[35px] w-[5px] items-center bg-[#5c5c5c]"><svg class="h-2 w-[5px]"><use href="#left"/></svg></button></div>

      <div class="flex min-w-0 flex-1 flex-col">
        <div class="flex h-[26px] items-center border-b border-[#b9c1c9] pl-1">
          <label for="xr">Open Cross Reference in:</label>
          <div class="flex flex-1"><div class="ml-1 flex h-[19px] w-[105px] border border-gray-300"><select id="xr" class="min-w-0 flex-1 appearance-none pl-[2px] leading-4"><option>This Window</option></select><span class="flex w-5 items-center justify-center border-l border-gray-300"><svg class="h-2 w-[10px] text-[#444]"><use href="#chev"/></svg></span></div><span class="ml-1 h-[19px] w-px bg-gray-300"></span></div>
          <a href="#" class="mr-[13px] text-[#0a00f0] underline">Sign-off Option</a>
          <div class="flex font-bold [&>span]:flex [&>span]:w-[53px] [&>span]:items-center [&>span]:gap-[1px]">
            <span>L1<svg class="h-3 w-3 text-[#e2141b]"><use href="#check"/></svg><svg class="ml-[9px] h-1 w-[6px]"><use href="#caret"/></svg></span>
            <span>L2<svg class="h-3 w-3"><use href="#checkout"/></svg><svg class="ml-[9px] h-1 w-[6px]"><use href="#caret"/></svg></span>
            <span>L3<svg class="h-3 w-3"><use href="#checkout"/></svg><svg class="ml-[9px] h-1 w-[6px]"><use href="#caret"/></svg></span>
            <span>L4<svg class="h-3 w-3"><use href="#checkout"/></svg><svg class="ml-[9px] h-1 w-[6px]"><use href="#caret"/></svg></span>
          </div>
          <svg class="mr-[3px] h-[15px] w-4"><use href="#warn"/></svg>
        </div>
        <div class="flex h-[27px] items-center bg-[#f1f1eb] pl-[5px] [&>button]:flex [&>button]:h-6 [&>button]:w-[30px] [&>button]:items-center [&>button]:justify-center [&>button>svg]:h-4 [&>button>svg]:w-4 [&>i]:h-5 [&>i]:w-px [&>i]:bg-[#dcdcd6]">
          <svg class="h-4 w-[3px]"><use href="#dots"/></svg>
          <button aria-label="Actual size"><svg><use href="#v1"/></svg></button><button class="ml-[2px]" aria-label="Fit width"><svg><use href="#v2"/></svg></button><button class="ml-[3px]" aria-label="Fit page"><svg><use href="#v3"/></svg></button><i></i>
          <button aria-label="Rotate right"><svg><use href="#rot"/></svg></button><button class="ml-[3px]" aria-label="Rotate 180"><svg class="rotate-90"><use href="#rot"/></svg></button><button class="ml-[2px]" aria-label="Rotate left"><svg class="-scale-x-100"><use href="#rot"/></svg></button><i></i>
          <button class="ml-[2px]" aria-label="Pan"><svg><use href="#hand"/></svg></button><i></i>
          <button class="ml-[2px]" aria-label="Select text"><svg><use href="#tsel"/></svg></button><button class="ml-[2px]" aria-label="Select lines"><svg><use href="#lsel"/></svg></button><button class="ml-[2px] bg-[#c0e0fb]" aria-label="Select objects"><svg><use href="#csel"/></svg></button><button class="ml-[2px]" aria-label="Verify"><svg><use href="#ichk"/></svg></button>
          <svg class="mt-2 mr-[5px] ml-auto h-2 w-[6px]"><use href="#over"/></svg>
        </div>
        <div class="flex min-h-0 flex-1">
          <div class="flex-1 bg-[#a9a9a9] pt-[10px] pl-[10px]"><div class="flex h-full flex-col items-start border-t border-l border-black bg-white">
            <span class="mt-[47px] ml-[410px] h-[11px] w-[19px] border border-cyan-300 bg-[#0a00f0] text-center text-[9px] leading-[9px] font-bold text-white">OC</span>
            <p class="mt-[17px] ml-[197px] font-['Liberation_Sans',sans-serif] text-[19px] leading-5 font-bold">Jill's Craft Shop</p>
          </div></div>
          <div class="flex w-[11px] flex-col items-center bg-[#cacaca] py-[5px]"><svg class="h-2 w-2"><use href="#up"/></svg><div class="mt-[2px] mb-auto h-[14px] w-2 bg-[#888]"></div><svg class="h-2 w-2"><use href="#down"/></svg></div>
        </div>
        <div class="flex h-[12px] items-center border-y border-gray-400 bg-[#cacaca] text-[#4a4d52]"><svg class="h-2 w-2"><use href="#left"/></svg><div class="ml-[1px] h-2 flex-1 bg-[#888]"></div><svg class="mr-[14px] ml-4 h-2 w-2"><use href="#right"/></svg></div>
        <div class="flex h-7 items-center text-[#2465a0]">
          <button aria-label="First page" class="ml-[172px]"><svg class="h-4 w-[10px]" viewBox="0 0 10 16"><path d="M0 1h2v14H0zM10 1v14L2.500 8z" fill="#2465a0"/></svg></button>
          <button aria-label="Previous page" class="ml-[26px]"><svg class="h-4 w-2" viewBox="0 0 8 16"><path d="M8 1v14L0 8z" fill="#2465a0"/></svg></button>
          <input aria-label="Page" value="43" class="ml-[19px] h-[19px] w-10 border border-gray-300 pr-[2px] text-right text-black"><span class="ml-[10px] w-[21px] pt-[2px] text-black">of</span><span class="w-[64px] pt-[2px] text-black">45&nbsp; Pages</span>
          <button aria-label="Next page"><svg class="h-4 w-2" viewBox="0 0 8 16"><path d="M0 1v14l8-7z" fill="#2465a0"/></svg></button>
          <button aria-label="Last page" class="ml-[21px]"><svg class="h-4 w-[10px]" viewBox="0 0 10 16"><path d="M8 1h2v14H8zM0 1v14l7.500-7z" fill="#2465a0"/></svg></button>
          <span class="ml-[23px] h-[18px] w-px bg-gray-300"></span>
          <button aria-label="Zoom out" class="ml-[14px] flex h-4 w-4 items-center justify-center bg-[#2465a0] text-white"><svg class="h-[10px] w-[10px]"><use href="#minus"/></svg></button>
          <div class="ml-[10px] flex h-[19px] w-[50px] border border-gray-300 text-black"><select aria-label="Zoom" class="min-w-0 flex-1 appearance-none pl-[5px] text-[12px] leading-4"><option>100</option></select><span class="flex w-[19px] items-center justify-center border-l border-gray-300 text-[#444]"><svg class="h-2 w-[10px]"><use href="#chev"/></svg></span></div>
          <button aria-label="Zoom in" class="ml-[9px] flex h-4 w-4 items-center justify-center bg-[#2465a0] text-white"><svg class="h-[10px] w-[10px]"><use href="#plus"/></svg></button>
          <span class="ml-[20px] h-[18px] w-px bg-gray-300"></span>
          <button aria-label="Back" class="ml-[18px]"><svg class="h-4 w-2" viewBox="0 0 8 16"><path d="M8 1v14L0 8z" fill="#2465a0"/></svg></button>
          <svg class="ml-[18px] h-4 w-4"><use href="#clock"/></svg>
          <button aria-label="Forward" class="ml-[18px]"><svg class="h-4 w-2" viewBox="0 0 8 16"><path d="M0 1v14l8-7z" fill="#8fb0d2"/></svg></button>
          <svg class="mt-2 ml-[19px] h-2 w-[6px] text-gray-400"><use href="#over"/></svg>
        </div>
      </div>

      <div class="flex w-[7px] shrink-0 items-center border-x border-[#b9c1c9] bg-[#f1f1eb] pb-5 text-white"><button aria-label="Collapse annotations" class="mt-6 flex h-[35px] w-[5px] items-center bg-[#5c5c5c]"><svg class="h-2 w-[5px]"><use href="#right"/></svg></button></div>
      <div class="flex w-[155px] shrink-0 flex-col">
        <button class="flex h-[25px] items-center bg-[#2465a0] pr-[5px] pl-9 font-bold text-white"><span class="flex-1 pt-[2px] text-left">ANNOTATE</span><svg class="h-2 w-[10px]"><use href="#chev"/></svg></button>
        <div class="mt-[2px] flex min-h-0 flex-1">
          <ul class="min-w-0 flex-1 overflow-hidden whitespace-nowrap [&>li]:flex [&>li]:h-[25px] [&>li]:items-center">
            <li class="bg-[#e3e3e3] pt-[2px] pl-[9px] text-[#444]"><svg class="mr-[7px] h-2 w-[10px]"><use href="#chevup"/></svg>HighLight</li>
            <li class="gap-3 border-b border-gray-300 pt-[2px] pl-1"><svg class="h-4 w-4" viewBox="0 0 16 16"><use href="#hl"/><path d="M0 12h16v4H0z" fill="#fdb92c"/></svg>Highlighter</li>
            <li class="gap-3 border-b border-gray-300 pt-[2px] pl-1"><svg class="h-4 w-4 shrink-0" viewBox="0 0 16 16"><use href="#hl"/><path d="M1 13c3-4 5 3 7 0s5-2 7 1" fill="none" stroke="#fdb92c" stroke-width="3"/></svg>Freehand Highlighter</li>
            <li class="gap-3 border-b border-gray-300 pt-[2px] pl-1"><svg class="h-[15px] w-4"><use href="#hlt"/></svg>Highlight Text</li>
            <li class="gap-3 border-b border-gray-300 pt-[2px] pl-1"><span class="h-4 w-4 border-b-2 border-red-600 text-center text-[16px] leading-[14px] font-black">A</span>Underline Text</li>
            <li class="gap-3 pt-[2px] pl-1"><span class="w-4 text-center text-[15px] leading-4 font-black line-through decoration-red-600 decoration-2">A</span>Crossout Text</li>
            <li class="bg-[#e3e3e3] pt-[2px] pl-[9px] text-[#444]"><svg class="mr-[7px] h-2 w-[10px]"><use href="#chevup"/></svg>Markups</li>
          </ul>
          <div class="flex w-[11px] flex-col items-center py-1"><svg class="mt-1 h-2 w-2"><use href="#up"/></svg><div class="mb-auto h-12 w-[6px] bg-[#888]"></div><svg class="h-2 w-2"><use href="#down"/></svg></div>
        </div>
      </div>
    </div>
  </section>
</div>

<div class="h-1 shrink-0 bg-white"></div>

<!-- forms / leads / notes -->
<section class="flex min-h-0 flex-1 flex-col border border-[#b9c1c9]">
  <div class="flex h-[19px] shrink-0 items-center border-b border-[#b9c1c9] bg-[#e8ebf0] pr-1 pl-[3px] text-[#2465a0]">
    <svg class="h-3 w-2"><use href="#grip"/></svg><h2 class="ml-1 pt-[2px]">Forms/Leads/Notes</h2>
    <svg class="mr-2 ml-auto h-3 w-[10px]"><use href="#pin"/></svg><svg class="h-[10px] w-[10px]"><use href="#x"/></svg>
  </div>
  <div class="flex h-[26px] shrink-0 items-center border-b border-gray-300 pr-2 pl-[7px]">
    <button aria-label="Scroll tabs left" class="flex h-[18px] w-[18px] items-center justify-center bg-[#2465a0] text-white"><svg class="h-2 w-2"><use href="#left"/></svg></button>
    <div class="ml-[6px] flex self-stretch text-[14px] [&>button]:border-r [&>button]:border-gray-300 [&>button]:pt-[2px]">
      <button class="w-[71px]">General</button><button class="w-[90px]">Extensions</button><button class="w-[69px]">Income</button><button class="w-[93px]">Deductions</button><button class="w-[57px]">Taxes</button><button class="w-[219px]">Payments / Penalties /Estimates</button><button class="w-[66px]">Credits</button><button class="w-[69px]">Foreign</button><button class="w-[58px]">Other</button><button class="w-[125px]">Tax Equalization</button><button class="w-[55px]">State</button><button class="w-[148px]">Unassociated Forms</button>
    </div>
    <button aria-label="Scroll tabs right" class="ml-auto flex h-[18px] w-[18px] items-center justify-center bg-[#2465a0] text-white"><svg class="h-2 w-2"><use href="#right"/></svg></button>
  </div>

  <div class="flex min-h-0 flex-1">
    <div class="flex w-[240px] shrink-0 flex-col">
      <h3 class="flex h-6 shrink-0 items-center border border-gray-300 bg-[#e3e3e3] pt-[2px] pl-[7px] font-bold"><svg class="mr-[14px] h-2 w-2"><use href="#chevup"/></svg>Interest (1099-INT)</h3>
      <ul class="[&>li]:flex [&>li]:h-[22px] [&>li]:items-center [&>li]:pt-[2px] [&>li]:pl-[6px]">
        <li class="bg-white font-semibold text-[#0a00f0]">4TTR (T)</li><li class="bg-[#f4f4f4] font-semibold text-[#0a00f0]">TRE (T)</li><li class="bg-white font-semibold text-[#0a00f0]">TTR (S)</li><li class="bg-[#f4f4f4] font-semibold text-[#0a00f0]">UUy (T)</li><li class="bg-[#b9ddff]">Enter Form Name</li>
      </ul>
      <div class="flex-1 bg-[#ebebeb]"></div>
      <div class="flex h-[33px] shrink-0 items-center border-t-2 border-b border-t-white border-b-gray-300 pl-[5px]">
        <button class="flex w-[54px] items-center gap-[2px] border-r border-gray-300 py-1"><svg class="h-[22px] w-[22px]"><use href="#fadd"/></svg>Add</button>
        <button class="ml-[7px] flex w-[69px] items-center gap-[2px] border-r border-gray-300 py-1"><svg class="h-[22px] w-[22px]"><use href="#fdel"/></svg>Delete</button>
        <button class="ml-2 flex items-center gap-[2px]"><svg class="h-[22px] w-[22px]"><use href="#fmov"/></svg>Move To</button>
      </div>
      <div class="h-[5px] shrink-0 bg-white"></div>
      <h3 class="flex h-6 shrink-0 items-center border border-gray-300 bg-[#e3e3e3] pt-[2px] pl-[7px] font-bold"><svg class="mr-[14px] h-2 w-2"><use href="#chevup"/></svg>Sections</h3>
      <div class="flex h-[107px] shrink-0 overflow-hidden">
        <ul class="flex-1 [&>li]:flex [&>li]:h-[22px] [&>li]:items-center [&>li]:pt-[2px] [&>li]:pl-[5px]">
          <li class="bg-white">IRS 1099-INT</li><li class="bg-[#f4f4f4]">Special Interest</li><li class="bg-white">Tax Exempt Interest</li><li class="bg-[#f4f4f4]">Other States</li><li class="bg-white">Foreign</li>
        </ul>
        <div class="flex w-[10px] flex-col items-center py-[5px]"><svg class="h-2 w-2"><use href="#up"/></svg><div class="mt-[2px] mb-auto h-[62px] w-[6px] bg-[#888]"></div><svg class="h-2 w-2"><use href="#down"/></svg></div>
      </div>
    </div>
    <div class="flex w-[6px] shrink-0 items-center border-x border-gray-300 bg-white text-white"><button aria-label="Collapse list" class="h-[35px] w-[6px] bg-[#444]"><svg class="h-2 w-[5px]"><use href="#left"/></svg></button></div>

    <div class="flex min-w-0 flex-1 flex-col">
      <div class="flex h-[33px] shrink-0 items-center border-b border-gray-300 pl-[10px]">
        <label class="flex items-center gap-1 text-[#999]"><input type="checkbox" disabled class="h-[14px] w-[14px] appearance-none border border-[#c4c4c4] bg-[#e8e8e4]">Inactive</label>
        <span class="ml-[22px] h-3 w-px bg-gray-300"></span>
        <label class="ml-5 flex items-center gap-1"><input type="checkbox" class="h-[14px] w-[14px] appearance-none border border-[#b5c0ca] bg-white">Mark Amounts as Estimate</label>
        <span class="ml-4 h-3 w-[2px] bg-gray-300"></span>
        <button aria-label="Import" class="relative ml-[10px] h-4 w-4"><svg class="h-4 w-4"><use href="#dl"/></svg><span class="absolute bottom-0 left-0 flex h-[10px] w-[10px] items-center justify-center bg-[#1e88c7] text-[8px] leading-[10px] font-bold text-white">←</span></button>
        <button aria-label="Clear" class="relative ml-[15px] h-4 w-4"><svg class="h-4 w-4 -scale-x-100"><use href="#dl"/></svg><span class="absolute right-0 bottom-0 flex h-[10px] w-[10px] items-center justify-center bg-[#f4511e] text-[8px] leading-[10px] font-bold text-white">C</span></button>
        <span class="mr-4 ml-auto flex items-center gap-[5px] text-[14px]"><i class="h-[18px] w-[3px] bg-red-600"></i>= Required Fields</span>
      </div>
      <div class="mr-[5px] flex min-h-0 flex-1 border-r border-gray-300 pl-[5px]">
        <div class="flex min-w-0 flex-1 flex-col">
          <p class="h-[23px] shrink-0 pt-[6px] font-['Open_Sans',sans-serif] text-[12px] font-normal">IRS 1099-INT</p>
          <div class="min-h-0 flex-1 overflow-hidden border border-b-0 border-gray-300 bg-white pt-2 pl-[6px] text-[12px] leading-[14px]">

            <!-- form 1099-INT -->
            <div class="grid w-[905px] grid-cols-[173px_206px_178px_191px_155px] grid-rows-[50px_118px_77px_51px_120px] border-t-2 border-l-2 border-black [&>div]:border-black [&_input]:h-5 [&_input]:border [&_input]:border-[#d3d3d3] [&_input]:bg-[#ebebeb] [&_button]:flex [&_button]:h-[14px] [&_button]:w-[14px] [&_button]:items-center [&_button]:justify-center [&_button]:border [&_button]:border-[#d3d3d3] [&_button_svg]:h-[10px] [&_button_svg]:w-[10px] [&_select]:min-w-0 [&_select]:flex-1 [&_select]:appearance-none">
              <div class="col-span-3 border-r border-b pl-[6px]">
                <p class="mt-[6px] mb-[7px] pl-2">TSJ</p>
                <div class="flex items-center gap-[2px]"><div class="flex h-5 w-[42px] border border-[#d3d3d3]"><select aria-label="TSJ" class="pl-[6px]"><option>…</option></select><span class="flex w-5 items-center justify-center border-l border-[#d3d3d3] text-[#555]"><svg class="h-2 w-[10px]"><use href="#chev"/></svg></span></div><button aria-label="Remove"><svg viewBox="0 0 10 10"><path d="M3 5h4" stroke="#000" stroke-width="2"/></svg></button></div>
              </div>
              <div class="border-r-2 border-b pl-[6px]"><label for="py" class="mt-[6px] mb-[7px] block pl-1">Prior year</label><input id="py" disabled class="w-[99px]"></div>
              <div class="row-span-3 flex items-center justify-center border-r-2 border-b-2 pt-5 font-['Open_Sans',sans-serif] text-[16px] leading-5 font-semibold">Interest Income</div>

              <div class="col-span-2 row-span-2 border-r border-b pl-[5px]">
                <label for="fn" class="mt-[6px] block pl-1 text-[11px] font-semibold">PAYER'S name, street address, city, state, ZIP code and phone no.</label>
                <div class="mt-2 flex h-5 w-[350px] border border-[#d3d3d3]"><i class="w-[3px] bg-red-600"></i><input id="fn" value="Enter Form Name" class="h-[18px]! flex-1 border-0! bg-white! pl-[3px]"></div>
                <div class="mt-[1px] flex items-center gap-[2px]"><input aria-label="Address" disabled class="w-[332px]"><button aria-label="Add"><svg><use href="#plus"/></svg></button></div>
                <div class="mt-[1px] flex items-center gap-[2px]"><input aria-label="City" disabled class="w-[132px]"><button aria-label="Add"><svg><use href="#plus"/></svg></button><div class="ml-[3px] flex h-5 w-[70px] border border-[#d3d3d3]"><select aria-label="State" class="pl-[7px]"><option>- (no…</option></select><span class="flex w-5 items-center justify-center border-l border-[#d3d3d3] text-[#555]"><svg class="h-2 w-[10px]"><use href="#chev"/></svg></span></div><input aria-label="ZIP" disabled class="ml-[1px] w-[107px]"><button aria-label="Add"><svg><use href="#plus"/></svg></button></div>
                <div class="mt-8 flex items-center gap-[2px]"><label for="f1" class="w-[151px] pt-[3px] pl-1">Foreign province/st/cnty</label><input id="f1" disabled class="min-h-[22px] w-[126px]"><button aria-label="Add"><svg><use href="#plus"/></svg></button></div>
                <div class="flex items-center gap-[2px]"><label for="f2" class="w-[151px] pt-[3px] pl-[3px]">Foreign postal code</label><input id="f2" disabled class="min-h-[22px] w-[126px]"><button aria-label="Add"><svg><use href="#plus"/></svg></button></div>
                <div class="mt-[2px] flex items-center gap-[2px]"><label for="f3" class="w-[151px] pt-[3px] pl-1">Foreign country code</label><div class="flex h-[18px] w-[60px] border border-[#d3d3d3]"><select id="f3" class="pl-[7px]"><option>- (n…</option></select><span class="flex w-5 items-center justify-center border-l border-[#d3d3d3] text-[#555]"><svg class="h-2 w-[10px]"><use href="#chev"/></svg></span></div></div>
              </div>
              <div class="flex flex-col justify-end border-r border-b pb-[2px]"><p class="flex pl-3"><span class="w-[14px]">1</span>Interest income</p><div class="mt-[10px] flex items-center gap-[2px] pl-[31px]"><input aria-label="Interest income" disabled class="w-[81px]"><button aria-label="Add"><svg><use href="#plus"/></svg></button></div></div>
              <div class="row-span-2 flex flex-col items-center border-r-2 border-b pt-[68px] font-['Open_Sans',sans-serif]"><b class="mr-5 text-[27px] leading-[30px] font-semibold">2022</b><span class="mt-10 mr-3 text-[14px] leading-5 font-normal">Form 1099-INT</span></div>
              <div class="flex flex-col justify-between border-r border-b pt-[15px] pb-[2px]"><p class="flex pl-3"><span class="w-[14px]">2</span>Early withdrawal penalty</p><div class="flex items-center gap-[2px] pl-[31px]"><input aria-label="Early withdrawal penalty" disabled class="w-[81px]"><button aria-label="Add"><svg><use href="#plus"/></svg></button></div></div>

              <div class="flex flex-col justify-between border-r border-b pt-[8px] pb-[2px] pl-[5px]"><label for="pid" class="pl-[3px] text-[11px] font-semibold">PAYER'S Federal ID no.</label><div class="flex items-center gap-[2px]"><input id="pid" disabled class="w-[107px]"><button aria-label="Add"><svg><use href="#plus"/></svg></button></div></div>
              <div class="flex flex-col justify-between border-r border-b pt-[8px] pb-[2px] pl-[6px]"><label for="rid" class="pl-[3px] text-[11px] font-semibold">RECIPIENT'S identification no.</label><div class="flex items-center gap-[2px]"><input id="rid" disabled class="w-[107px]"><button aria-label="Add"><svg><use href="#plus"/></svg></button></div></div>
              <div class="col-span-2 flex flex-col justify-between border-r-2 border-b pt-[8px] pb-[2px]"><p class="flex pl-3 text-[11px] font-semibold"><span class="w-[14px]">3</span>Interest on U.S. Savings Bonds and Treas. Obligations</p><div class="flex items-center gap-[2px] pl-[31px]"><input aria-label="Bond interest" disabled class="w-[81px]"><button aria-label="Add"><svg><use href="#plus"/></svg></button></div></div>
              <div class="row-span-2 border-r-2"><p class="mt-[9px] pl-5 font-['Open_Sans',sans-serif] text-[14px] leading-5 font-semibold">Form 1099-OID</p><p class="mt-[42px] flex pl-[11px]"><span class="w-[13px]">1</span>Original Issue Discount</p><div class="mt-[25px] flex items-center gap-[2px] pl-[31px]"><input aria-label="Original issue discount" disabled class="w-[81px]"><button aria-label="Add"><svg><use href="#plus"/></svg></button></div></div>

              <div class="col-span-2 border-r pl-[5px]"><label for="rn" class="mt-[7px] block pl-[3px]">RECIPIENT'S name</label><div class="mt-2 flex items-center gap-[2px]"><input id="rn" disabled class="w-[332px]"><button aria-label="Add"><svg><use href="#plus"/></svg></button></div><p class="mt-[8px] pl-[3px]">Street address (including apt. no.)</p></div>
              <div class="border-r"><p class="mt-[8px] flex pl-3"><span class="w-5">4</span><span>Federal income<br>tax withheld</span></p><div class="mt-[22px] flex items-center gap-[2px] pl-[31px]"><input aria-label="Tax withheld" disabled class="w-[81px]"><button aria-label="Add"><svg><use href="#plus"/></svg></button></div></div>
              <div class="border-r-2"><p class="mt-[8px] flex h-7 pl-3"><span class="w-[14px]">5</span>Investment expenses</p><div class="mt-[22px] flex items-center gap-[2px] pl-[33px]"><input aria-label="Investment expenses" disabled class="w-[81px]"><button aria-label="Add"><svg><use href="#plus"/></svg></button></div></div>
            </div>
          </div>
          <div class="flex h-3 shrink-0 items-center justify-between text-[#4a4d52]"><svg class="h-2 w-2"><use href="#left"/></svg><svg class="h-2 w-2"><use href="#right"/></svg></div>
        </div>
        <div class="flex w-[10px] shrink-0 flex-col items-center pt-[7px] pb-4"><svg class="h-2 w-2"><use href="#up"/></svg><div class="mt-[2px] mb-auto h-[91px] w-[6px] bg-[#888]"></div><svg class="h-2 w-2"><use href="#down"/></svg></div>
        <div class="mr-[3px] flex w-[6px] shrink-0 items-center bg-white text-white"><button aria-label="Expand pane" class="h-[35px] w-[6px] bg-[#5c5c5c]"><svg class="h-2 w-[5px]"><use href="#left"/></svg></button></div>
      </div>
    </div>
  </div>
  <div class="flex h-7 shrink-0 border-t border-[#b9c1c9] bg-white">
    <button class="w-[125px] bg-[#1ab66b] pt-[2px] font-bold text-white">FORMS</button><button class="w-[125px] pt-[2px] font-semibold text-[#0c8c55]">LEADS</button><button class="w-[125px] pt-[2px] font-semibold text-[#0c8c55]">NOTES</button>
  </div>
</section>

<footer class="grid h-8 shrink-0 grid-cols-3 items-center px-2 pt-2">
  <span></span><span class="pl-6 text-center">All changes saved.</span><span class="flex items-center justify-end gap-1 pr-1"><svg class="h-4 w-4"><use href="#ok"/></svg>Connected to SurePrep</span>
</footer>
</main>
</div>

<!-- taskbar -->
<div class="flex h-10 shrink-0 bg-[#222] font-['Open_Sans',sans-serif] text-[12px] font-normal text-white">
  <button aria-label="Start" class="flex w-12 items-center justify-center"><svg class="h-4 w-4"><use href="#win"/></svg></button>
  <label class="flex w-72 items-center border border-gray-400 bg-[#f2f2f2] pl-[11px] text-[#222]"><svg class="h-[18px] w-[18px]"><use href="#mag"/></svg><input aria-label="Search" placeholder="Type here to search" class="ml-[10px] w-60 text-[14px] text-[#333] placeholder-[#444] outline-none"></label>
  <button aria-label="Task view" class="flex w-[51px] items-center justify-center"><svg class="h-4 w-[18px]"><use href="#tview"/></svg></button>
  <div class="flex gap-[1px] [&>button]:flex [&>button]:w-12 [&>button]:flex-col [&>button]:items-center [&>button]:justify-between [&>button]:pt-2 [&_svg]:h-6 [&_svg]:w-6 [&_i]:h-[2px] [&_i]:w-10 [&_i]:bg-[#76b9ed]">
    <button aria-label="Chrome"><svg><use href="#chrome"/></svg><i></i></button><button aria-label="Explorer"><svg><use href="#expl"/></svg></button><button aria-label="Edge"><svg><use href="#edge"/></svg><i></i></button><button aria-label="Teams"><svg><use href="#teams"/></svg><i></i></button><button aria-label="Screen share"><svg><use href="#sapp"/></svg><i></i></button><button aria-label="Excel"><svg><use href="#excel"/></svg><i></i></button><button aria-label="Outlook"><svg><use href="#outl"/></svg><i></i></button><button aria-label="Recorder"><svg><use href="#play"/></svg><i></i></button><button aria-label="SPbinder" class="bg-[#4d4d4d]"><svg><use href="#logoDark"/></svg><i class="min-w-12"></i></button>
  </div>
  <div class="ml-auto flex items-center">
    <svg class="h-4 w-6"><use href="#news"/></svg>
    <svg class="ml-[26px] h-[10px] w-3" viewBox="0 0 12 10"><path d="M.5 8L6 2l5.500 6" fill="none" stroke="#fff" stroke-width="1.300"/></svg>
    <svg class="ml-[10px] h-[10px] w-4"><use href="#cloud"/></svg><svg class="ml-2 h-[14px] w-4"><use href="#net"/></svg><svg class="ml-2 h-[14px] w-4"><use href="#snd"/></svg>
    <div class="ml-[9px] w-6 text-center leading-[17px]">ENG<br>US</div><div class="ml-2 w-[62px] text-center leading-[18px] whitespace-nowrap">12:03 PM<br>7/18/2023</div>
    <button class="relative mr-[19px] ml-[14px] h-4 w-4"><svg class="h-4 w-4"><use href="#note"/></svg><span class="absolute top-[7px] left-[7px] h-4 w-4 rounded-full border border-gray-400 bg-[#333] text-[11px] leading-[14px]">3</span></button>
    <span class="mr-1 h-10 w-px bg-gray-500"></span>
  </div>
</div>
</div>

<!-- ============ secondary display ============ -->
<div class="flex min-h-0 min-w-0 flex-col bg-[#ebebeb]">
  <svg class="min-h-0 w-full flex-1" viewBox="0 0 1440 860" role="img" aria-label="SurePrep, part of Thomson Reuters">
    <ellipse cx="717" cy="433" rx="281" ry="313" fill="#fff"/><ellipse cx="719" cy="433" rx="177" ry="200" fill="#ebebeb"/>
    <path d="M546 329H671L720 411 877 154H1005L717 587z" fill="#ebebeb" stroke="#ebebeb" stroke-width="25" stroke-linejoin="round"/>
    <path d="M546 329H671L720 411 877 154H1005L717 587z" fill="#fff"/>
    <path fill-rule="evenodd" d="M507 431a41.400 46 0 1082.800 0 41.400 46 0 10-82.800 0zM522 431a26.500 29.500 0 1053 0 26.500 29.500 0 10-53 0z" fill="url(#ring)"/>
    <path d="M523.700 416.500H542L549.400 427.400 571.800 390.400H591L548.600 453.500z" fill="#2465a0" stroke="#fff" stroke-width="3" paint-order="stroke"/>
    <text x="605" y="462" font-family="Lato, sans-serif" font-size="79" font-weight="900">Sure</text>
    <text x="766" y="462" font-family="Lato, sans-serif" font-size="80" font-weight="300">Prep</text>
    <text x="922" y="418" font-family="Lato, sans-serif" font-size="21">®</text>
    <text x="606" y="512" font-family="Noto Sans, sans-serif" font-size="27" font-weight="500">Part of Thomson Reuters</text>
  </svg>
  <div class="flex h-10 shrink-0 bg-[#222] font-['Open_Sans',sans-serif] text-[12px] font-normal text-white">
    <button aria-label="Start" class="flex w-12 items-center justify-center"><svg class="h-4 w-4"><use href="#win"/></svg></button>
    <button aria-label="Search" class="flex w-12 items-center justify-center"><svg class="h-[22px] w-[22px]" viewBox="0 0 22 22"><circle cx="13" cy="9" r="7.500" fill="none" stroke="#fff" stroke-width="2"/><path d="M8 14.500l-6.500 6.500" stroke="#fff" stroke-width="2"/></svg></button>
    <button aria-label="Task view" class="flex w-[51px] items-center justify-center"><svg class="h-4 w-[18px]"><use href="#tview"/></svg></button>
    <div class="flex gap-[1px] [&>button]:flex [&>button]:w-12 [&>button]:flex-col [&>button]:items-center [&>button]:justify-between [&>button]:pt-2 [&_svg]:h-6 [&_svg]:w-6 [&_i]:h-[2px] [&_i]:w-10 [&_i]:bg-[#76b9ed]">
      <button aria-label="Chrome"><svg><use href="#chrome"/></svg><i></i></button><button aria-label="Explorer"><svg><use href="#expl"/></svg></button><button aria-label="Edge"><svg><use href="#edge"/></svg><i></i></button><button aria-label="Teams"><svg><use href="#teams"/></svg><i></i></button><button aria-label="Screen share"><svg><use href="#sapp"/></svg><i></i></button><button aria-label="Excel"><svg><use href="#excel"/></svg><i></i></button><button aria-label="Outlook"><svg><use href="#outl"/></svg><i></i></button><button aria-label="Recorder"><svg><use href="#play"/></svg><i></i></button><button aria-label="SPbinder" class="bg-[#4d4d4d]"><svg><use href="#logoDark"/></svg><i class="min-w-12"></i></button>
    </div>
    <div class="mr-[3px] ml-auto self-center text-center leading-[18px]">12:03 PM<br>7/18/2023</div>
  </div>
</div>
</div>
</body>
</html>
